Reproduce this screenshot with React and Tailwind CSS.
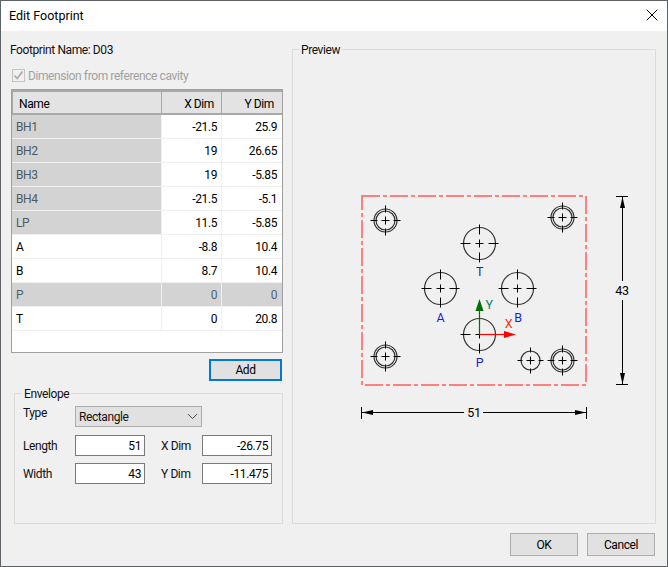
import React from 'react';
import { ChevronDown, X } from 'lucide-react';

const font = { fontFamily: 'Roboto, "Liberation Sans", Arial, sans-serif' };

const rows = [
  { name: 'BH1', x: '-21.5', y: '25.9', kind: 'name' },
  { name: 'BH2', x: '19', y: '26.65', kind: 'name' },
  { name: 'BH3', x: '19', y: '-5.85', kind: 'name' },
  { name: 'BH4', x: '-21.5', y: '-5.1', kind: 'name' },
  { name: 'LP', x: '11.5', y: '-5.85', kind: 'name' },
  { name: 'A', x: '-8.8', y: '10.4' },
  { name: 'B', x: '8.7', y: '10.4' },
  { name: 'P', x: '0', y: '0', kind: 'all' },
  { name: 'T', x: '0', y: '20.8' },
];

const Hole = ({ cx, cy, r, reach, gap, dbl }) => {
  const segs = [
    [cx - reach, cy, cx - gap, cy], [cx + gap, cy, cx + reach, cy],
    [cx, cy - reach, cx, cy - gap], [cx, cy + gap, cx, cy + reach],
    [cx - 4, cy, cx + 4, cy], [cx, cy - 4, cx, cy + 4],
  ];
  return (
    <g>
      <circle cx={cx} cy={cy} r={r} fill="none" stroke="#333" strokeWidth="1.2" />
      {dbl && <circle cx={cx} cy={cy} r={r - 2} fill="none" stroke="#333" strokeWidth="1.2" />}
      {segs.map((s, i) => (
        <line key={i} x1={s[0]} y1={s[1]} x2={s[2]} y2={s[3]} stroke="#000" strokeWidth="1" />
      ))}
    </g>
  );
};

const Label = ({ x, y, fill = '#1c1ce0', children }) => (
  <text x={x} y={y} fill={fill} fontSize="12.5" textAnchor="middle" fontFamily="Roboto, Liberation Sans, Arial, sans-serif">{children}</text>
);

const Preview = () => (
  <svg width="362" height="473" viewBox="293 50 362 473">
    <rect x="362" y="196" width="224" height="189" fill="none" stroke="#ff7f7f" strokeWidth="2" strokeDasharray="18 3 4 3" />

    <Hole cx={385.5} cy={220.5} r={11.5} reach={15} gap={8} dbl />
    <Hole cx={562.5} cy={217.5} r={11.5} reach={15} gap={8} dbl />
    <Hole cx={385.5} cy={356.5} r={11.5} reach={15} gap={8} dbl />
    <Hole cx={562.5} cy={360.5} r={11.5} reach={15} gap={8} dbl />
    <Hole cx={530.5} cy={360.5} r={9.5} reach={13} gap={8} />
    <Hole cx={479.5} cy={243.5} r={16} reach={19} gap={9} />
    <Hole cx={440.5} cy={288.5} r={16} reach={19} gap={9} />
    <Hole cx={517.5} cy={288.5} r={16} reach={19} gap={9} />
    <Hole cx={479.5} cy={334.5} r={16} reach={19} gap={9} />

    <line x1="479.5" y1="334.5" x2="479.5" y2="310" stroke="#007000" strokeWidth="1.2" />
    <polygon points="479.5,299 475.5,311 483.5,311" fill="#007000" />
    <line x1="479.5" y1="334.5" x2="505" y2="334.5" stroke="#ff0000" strokeWidth="1.2" />
    <polygon points="516,334.5 504,331 504,338" fill="#ff0000" />

    <Label x={479.5} y={276}>T</Label>
    <Label x={440.5} y={322}>A</Label>
    <Label x={518} y={322}>B</Label>
    <Label x={479.5} y={367}>P</Label>
    <Label x={508.5} y={328} fill="#f03010">X</Label>
    <Label x={489} y={309} fill="#00806a">Y</Label>

    {/* height dimension */}
    <line x1="622.5" y1="196" x2="622.5" y2="281" stroke="#000" strokeWidth="1" />
    <line x1="622.5" y1="300" x2="622.5" y2="385" stroke="#000" strokeWidth="1" />
    <line x1="616" y1="196.5" x2="628" y2="196.5" stroke="#000" strokeWidth="1" />
    <line x1="616" y1="384.5" x2="628" y2="384.5" stroke="#000" strokeWidth="1" />
    <polygon points="622.5,197 620,208 625,208" fill="#000" />
    <polygon points="622.5,384 620,373 625,373" fill="#000" />
    <Label x={622} y={295} fill="#000">43</Label>

    {/* width dimension */}
    <line x1="362" y1="412.5" x2="464" y2="412.5" stroke="#000" strokeWidth="1" />
    <line x1="483" y1="412.5" x2="586" y2="412.5" stroke="#000" strokeWidth="1" />
    <line x1="361.5" y1="407" x2="361.5" y2="419" stroke="#000" strokeWidth="1" />
    <line x1="586.5" y1="407" x2="586.5" y2="419" stroke="#000" strokeWidth="1" />
    <polygon points="362,412.5 373,410 373,415" fill="#000" />
    <polygon points="586,412.5 575,410 575,415" fill="#000" />
    <Label x={474} y={417} fill="#000">51</Label>
  </svg>
);

const Field = ({ value }) => (
  <div className="flex h-[21px] w-[70px] items-center justify-end border border-[#7a7a7a] bg-white pr-[3px] text-black">{value}</div>
);

const cellTone = (row, col) => {
  if (row.kind === 'all') return 'bg-[#d3d3d3] text-[#4d6478]';
  if (row.kind === 'name' && col === 0) return 'bg-[#d3d3d3] text-[#4d5a66]';
  return 'bg-white text-black';
};

const FootprintTable = () => (
  <div className="h-[264px] w-[272px] border border-[#a0a0a0] bg-white">
    <div className="grid h-[25px] grid-cols-[150px_60px_60px] border-y-2 border-[#a8a8a8] bg-[#e3e3e3] text-black">
      <div className="flex items-center border-x border-[#a8a8a8] pl-[6px] pt-[2px]">Name</div>
      <div className="flex items-center justify-end border-r border-[#a8a8a8] pr-[7px] pt-[2px]">X Dim</div>
      <div className="flex items-center justify-end pr-[8px] pt-[2px]">Y Dim</div>
    </div>
    {rows.map((row) => (
      <div key={row.name} className="grid h-[24px] grid-cols-[150px_60px_60px]">
        <div className={`flex items-center border-r border-b border-[#f0f0f0] pl-[4px] pt-[1px] ${cellTone(row, 0)}`}>{row.name}</div>
        <div className={`flex items-center justify-end border-r border-b border-[#f0f0f0] pr-[4px] pt-[1px] ${cellTone(row, 1)}`}>{row.x}</div>
        <div className={`flex items-center justify-end border-b border-[#f0f0f0] pr-[5px] pt-[1px] ${cellTone(row, 2)}`}>{row.y}</div>
      </div>
    ))}
  </div>
);

const Envelope = () => (
  <div className="relative ml-[3px] mt-[12px] h-[131px] w-[269px] border border-[#dcdcdc] px-[8px] text-[#111]">
    <div className="absolute left-[7px] top-[-7px] bg-[#f0f0f0] px-[2px] leading-[14px]">Envelope</div>
    <div className="mt-[12px] flex h-[21px] items-start">
      <div className="w-[52px] leading-[14px]">Type</div>
      <div className="flex h-[21px] w-[127px] items-center justify-between border border-[#adadad] bg-[#e1e1e1] pl-[3px]">
        <span>Rectangle</span>
        <ChevronDown size={17} strokeWidth={1.4} color="#444" />
      </div>
    </div>
    <div className="mt-[8px] flex h-[21px] items-center">
      <div className="w-[52px]">Length</div>
      <Field value="51" />
      <div className="w-[57px] pl-[16px]">X Dim</div>
      <Field value="-26.75" />
    </div>
    <div className="mt-[7px] flex h-[21px] items-center">
      <div className="w-[52px]">Width</div>
      <Field value="43" />
      <div className="w-[57px] pl-[16px]">Y Dim</div>
      <Field value="-11.475" />
    </div>
  </div>
);

export default function App() {
  return (
    <div style={font} className="flex h-[567px] w-[668px] flex-col overflow-hidden border border-[#5f6368] bg-[#f0f0f0] text-[12px] leading-none tracking-[-0.4px]">
      <div className="flex h-[30px] items-center justify-between bg-white pl-[8px] pr-[5px] text-[12.5px] tracking-normal text-black">
        <span>Edit Footprint</span>
        <X size={20} strokeWidth={1.2} color="#000" className="mb-[2px]" />
      </div>

      <div className="flex flex-1">
        <div className="ml-[10px] w-[272px]">
          <div className="-ml-[1px] mt-[11px] pt-[1px] h-[14px] leading-[14px] text-[#111]">Footprint Name: D03</div>
          <div className="mt-[12px] flex h-[14px] items-center gap-[3px] text-[#a0a0a0]">
            <div className="ml-[1px] flex h-[13px] w-[13px] items-center justify-center border border-[#c4c4c4]">
              <svg width="11" height="11" viewBox="0 0 11 11"><path d="M1.5 5.5 L4.2 8.5 L9.5 1.5" fill="none" stroke="#a8a8a8" strokeWidth="1.6" /></svg>
            </div>
            <span className="pt-[1px]">Dimension from reference cavity</span>
          </div>
          <div className="mt-[7px]"><FootprintTable /></div>
          <div className="mt-[6px] flex justify-end pr-[1px]">
            <button className="h-[22px] w-[73px] border-2 border-[#0078d7] bg-[#e1e1e1] text-black">Add</button>
          </div>
          <Envelope />
        </div>

        <div className="relative ml-[9px] mt-[18px] h-[475px] w-[364px] border border-[#dcdcdc]">
          <div className="absolute left-[6px] top-[-7px] bg-[#f0f0f0] px-[2px] leading-[14px] text-[#111]">Preview</div>
          <Preview />
        </div>
      </div>

      <div className="flex h-[33px] justify-end gap-[9px] pr-[12px]">
        <button className="h-[23px] w-[68px] border border-[#adadad] bg-[#e1e1e1] text-black">OK</button>
        <button className="h-[23px] w-[68px] border border-[#adadad] bg-[#e1e1e1] text-black">Cancel</button>
      </div>
    </div>
  );
}
